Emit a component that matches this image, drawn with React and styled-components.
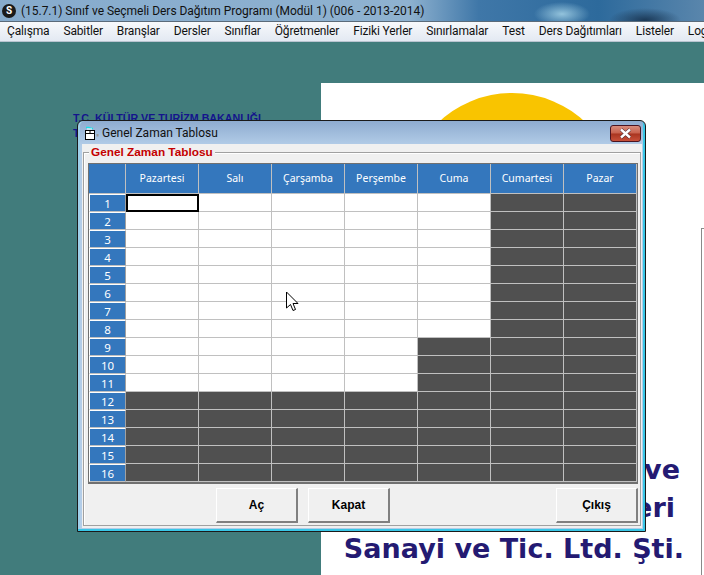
import React from "react";
import styled, { createGlobalStyle } from "styled-components";

const GlobalStyle = createGlobalStyle`
  * {
    box-sizing: border-box;
  }

  html, body {
    margin: 0;
    padding: 0;
    width: 704px;
    height: 575px;
    overflow: hidden;
    font-family: 'Roboto', 'Liberation Sans', sans-serif;
  }
`;

const Screen = styled.div`
  width: 704px;
  height: 575px;
  display: flex;
  flex-direction: column;
  overflow: hidden;
`;

const TitleBar = styled.div`
  height: 21px;
  flex: none;
  display: flex;
  align-items: center;
  gap: 5px;
  padding-left: 2px;
  background:
    radial-gradient(ellipse 28px 12px at 562px 14px, #93c3dc 0%, transparent 100%),
    radial-gradient(ellipse 36px 12px at 645px 20px, #1c3a58 0%, transparent 100%),
    linear-gradient(90deg, #86abcd 0%, #8fb2d0 58%, #3f77a8 68%, #2d6a9c 85%, #5a86ac 100%);
`;

const AppBadge = styled.div`
  width: 14px;
  height: 14px;
  border-radius: 50%;
  background: #1a1a1a;
  color: #fff;
  font-size: 10px;
  font-weight: 700;
  line-height: 14px;
  text-align: center;
`;

const TitleText = styled.span`
  font-size: 12px;
  letter-spacing: -0.03px;
  color: #111;
  white-space: nowrap;
`;

const MenuBar = styled.div`
  height: 21px;
  flex: none;
  display: flex;
  align-items: center;
  gap: 14px;
  padding: 0 0 1px 7px;
  white-space: nowrap;
  overflow: hidden;
  border-top: 1px solid #5b6b7a;
  border-bottom: 1px solid #b9c4d0;
  background: linear-gradient(180deg, #f7f9fc 0%, #e3e9f2 100%);
  font-size: 12px;
  letter-spacing: -0.15px;
  color: #111;
`;

const Desktop = styled.div`
  position: relative;
  flex: 1;
  background: #417c7c;
`;

const SplashPanel = styled.div`
  position: absolute;
  left: 321px;
  top: 41px;
  width: 383px;
  height: 492px;
  background: #fff;
  overflow: hidden;
`;

const Sun = styled.div`
  position: absolute;
  left: 84px;
  top: 10px;
  width: 214px;
  height: 214px;
  border-radius: 50%;
  background: #f9c400;
`;

const SideRule = styled.div`
  position: absolute;
  left: 380px;
  top: 145px;
  width: 3px;
  height: 347px;
  background: #fff;
  border-left: 1px solid #8a8a8a;
  border-top: 1px solid #8a8a8a;
`;

const BrandLine = styled.div`
  position: absolute;
  right: ${(p) => p.$right}px;
  top: ${(p) => p.$top}px;
  font-family: 'DejaVu Sans', sans-serif;
  font-size: 27px;
  font-weight: 700;
  line-height: 34px;
  color: #241a72;
  white-space: nowrap;
`;

const MinistryLine = styled.div`
  position: absolute;
  left: 73px;
  top: ${(p) => p.$top}px;
  font-family: 'Liberation Sans', sans-serif;
  font-size: 10.7px;
  font-weight: 700;
  color: #14148c;
  white-space: nowrap;
`;

const Dialog = styled.div`
  position: absolute;
  left: 77px;
  top: 78px;
  width: 569px;
  height: 412px;
  display: flex;
  flex-direction: column;
  padding: 1px 3px 3px 4px;
  border: 1px solid #1a1a1a;
  border-radius: 6px 6px 0 0;
  background: linear-gradient(180deg, #8eacd0 0%, #b3cde8 6%, #b3cde8 100%);
  box-shadow: inset -2px -2px 0 #39c6e6, inset 2px 0 0 #9fd0ea;
`;

const DialogHead = styled.div`
  height: 22px;
  flex: none;
  display: flex;
  align-items: center;
  gap: 3px;
  padding-left: 2px;
  font-size: 12px;
  color: #111;
`;

const CloseButton = styled.div`
  margin-left: auto;
  margin-right: 1px;
  width: 31px;
  height: 17px;
  display: flex;
  align-items: center;
  justify-content: center;
  border: 1px solid #4a1420;
  border-radius: 3px;
  background: linear-gradient(180deg, #d88d7c 0%, #c8604c 48%, #a8341f 52%, #c8503a 100%);
`;

const DialogBody = styled.div`
  flex: 1;
  display: flex;
  flex-direction: column;
  background: #f0f0f0;
  padding: 8px 1px 2px 1px;
`;

const GroupBox = styled.div`
  position: relative;
  flex: 1;
  display: flex;
  flex-direction: column;
  padding: 10px 3px 0 4px;
  border: 1px solid #a0a0a0;
  box-shadow: inset 1px 1px 0 #fff;
`;

const GroupLegend = styled.span`
  position: absolute;
  left: 5px;
  top: -7px;
  padding: 0 2px;
  background: #f0f0f0;
  font-family: 'Liberation Sans', sans-serif;
  font-size: 11.8px;
  line-height: 13px;
  font-weight: 700;
  color: #c40000;
`;

const Grid = styled.div`
  display: grid;
  grid-template-columns: 37px repeat(7, 73px);
  grid-template-rows: 30px repeat(16, 18px);
  width: 550px;
  border: 1px solid #707070;
  border-right-width: 2px;
  border-bottom-width: 2px;
  background: #c0c0c0;
`;

const HeaderCell = styled.div`
  display: flex;
  align-items: center;
  justify-content: center;
  padding-bottom: 1px;
  border-right: 1px solid #c0c0c0;
  border-bottom: 1px solid #c0c0c0;
  background: #3477bd;
  font-family: 'Noto Sans', sans-serif;
  font-size: 10.5px;
  color: #fff;
`;

const RowLabel = styled(HeaderCell)`
  padding-bottom: 0;
  border-top: 1px solid #fff;
  border-left: 1px solid #fff;
  border-right: 1px solid #a0a0a0;
  font-size: 11.5px;
`;

const Cell = styled.div`
  border-right: 1px solid #c0c0c0;
  border-bottom: 1px solid #c0c0c0;
  background: ${(p) => (p.$open ? "#fff" : "#505050")};
  ${(p) => p.$active && "outline: 2px solid #000; outline-offset: -2px;"}
`;

const ButtonRow = styled.div`
  display: flex;
  padding: 4px 0 0 128px;
  gap: 10px;
`;

const PushButton = styled.div`
  flex: none;
  width: 82px;
  height: 35px;
  margin-left: ${(p) => p.$gap || 0}px;
  display: flex;
  align-items: center;
  justify-content: center;
  background: #f0f0f0;
  border-top: 1px solid #fff;
  border-left: 1px solid #fff;
  border-right: 2px solid #808080;
  border-bottom: 2px solid #808080;
  font-family: 'Liberation Sans', sans-serif;
  font-size: 12px;
  font-weight: 700;
  color: #000;
`;

const Pointer = styled.svg`
  position: absolute;
  left: 285px;
  top: 249px;
`;

const DAYS = ["Pazartesi", "Salı", "Çarşamba", "Perşembe", "Cuma", "Cumartesi", "Pazar"];
// how many lesson hours are open per day, the rest is drawn dark
const OPEN_HOURS = [11, 11, 11, 11, 8, 0, 0];
const HOURS = Array.from({ length: 16 }, (_, i) => i + 1);
const MENU = [
  "Çalışma",
  "Sabitler",
  "Branşlar",
  "Dersler",
  "Sınıflar",
  "Öğretmenler",
  "Fiziki Yerler",
  "Sınırlamalar",
  "Test",
  "Ders Dağıtımları",
  "Listeler",
  "Log",
];

function FolderIcon() {
  return (
    <svg width="15" height="15" viewBox="0 0 15 15">
      <path d="M2 1.5h3l2 1h2" stroke="#19e0e8" strokeWidth="1.5" fill="none" />
      <path d="M3 3h5" stroke="#fff" fill="none" />
      <rect x="1.5" y="4.5" width="9" height="9" fill="#fff" stroke="#000" />
      <path d="M1.5 7.5h9M6 4.5v3" stroke="#000" />
      <rect x="12.5" y="8" width="2" height="2.5" fill="#9a9a9a" />
    </svg>
  );
}

function TimeGrid() {
  return (
    <Grid>
      <HeaderCell />
      {DAYS.map((day) => (
        <HeaderCell key={day}>{day}</HeaderCell>
      ))}
      {HOURS.map((hour) => (
        <React.Fragment key={hour}>
          <RowLabel>{hour}</RowLabel>
          {DAYS.map((day, d) => (
            <Cell
              key={day}
              $open={hour <= OPEN_HOURS[d]}
              $active={hour === 1 && d === 0}
            />
          ))}
        </React.Fragment>
      ))}
    </Grid>
  );
}

export default function App() {
  return (
    <Screen>
      <GlobalStyle />
      <TitleBar>
        <AppBadge>S</AppBadge>
        <TitleText>(15.7.1) Sınıf ve Seçmeli Ders Dağıtım Programı (Modül 1) (006 - 2013-2014)</TitleText>
      </TitleBar>
      <MenuBar>
        {MENU.map((item) => (
          <span key={item}>{item}</span>
        ))}
      </MenuBar>
      <Desktop>
        <SplashPanel>
          <Sun />
          <SideRule />
          <BrandLine $right={24} $top={370}>ve</BrandLine>
          <BrandLine $right={29} $top={408}>eri</BrandLine>
          <BrandLine $right={20} $top={449}>Sanayi ve Tic. Ltd. Şti.</BrandLine>
        </SplashPanel>
        <MinistryLine $top={70}>T.C. KÜLTÜR VE TURİZM BAKANLIĞI</MinistryLine>
        <MinistryLine $top={85}>T</MinistryLine>
        <Dialog>
          <DialogHead>
            <FolderIcon />
            Genel Zaman Tablosu
            <CloseButton>
              <svg width="15" height="11" viewBox="0 0 15 11">
                <path d="M3 1.5l9 8M12 1.5l-9 8" stroke="#40202a" strokeWidth="3.6" />
                <path d="M3 1.5l9 8M12 1.5l-9 8" stroke="#fff" strokeWidth="2.4" />
              </svg>
            </CloseButton>
          </DialogHead>
          <DialogBody>
            <GroupBox>
              <GroupLegend>Genel Zaman Tablosu</GroupLegend>
              <TimeGrid />
              <ButtonRow>
                <PushButton>Aç</PushButton>
                <PushButton>Kapat</PushButton>
                <PushButton $gap={156}>Çıkış</PushButton>
              </ButtonRow>
            </GroupBox>
          </DialogBody>
        </Dialog>
        <Pointer width="14" height="22" viewBox="0 0 14 22">
          <path d="M1.5 1v16l4-3.5 2.5 6 2.5-1-2.5-6h5z" fill="#fff" stroke="#000" />
        </Pointer>
      </Desktop>
    </Screen>
  );
}
